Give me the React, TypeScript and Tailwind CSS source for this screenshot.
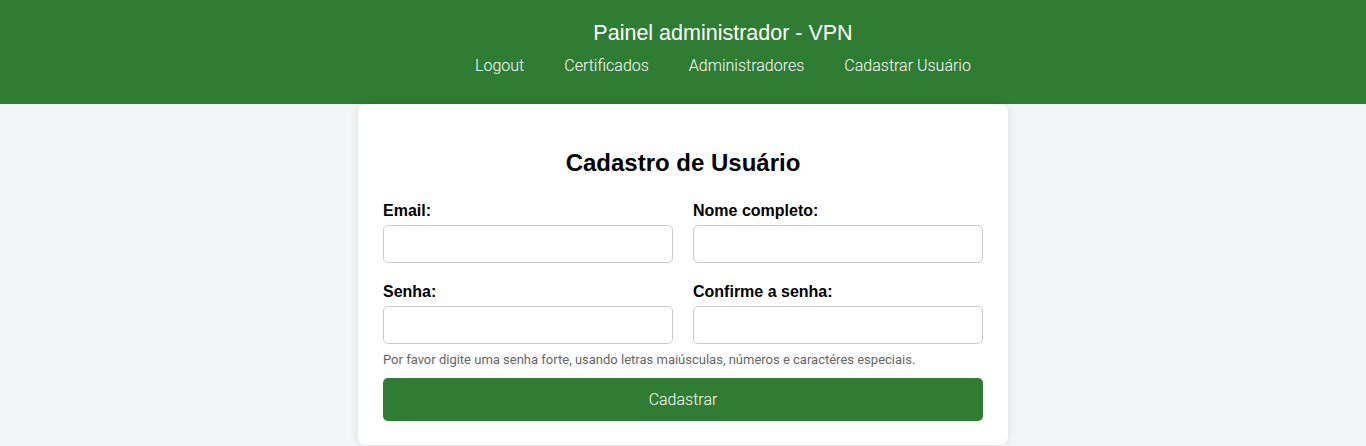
const Field = ({ label, type }: { label: string; type: string }) => (
  <div className="flex flex-col">
    <label className="text-[16px] font-bold leading-[18px] text-black mb-[5px]">{label}</label>
    <input type={type} className="h-[38px] w-full rounded-[5px] border border-[#cccccc] bg-white px-2 outline-none" />
  </div>
);

export default function App() {
  return (
    <div className="min-h-screen bg-[#f4f5f7] font-['Liberation_Sans',Arial,sans-serif]">
      <header className="h-[104px] bg-[#2e7d32] pl-[80px] text-white flex flex-col items-center">
        <h1 className="mt-[21px] text-[21.5px] leading-[25px]">Painel administrador - VPN</h1>
        <nav className="mt-[10px] flex gap-[40px] font-['Roboto',sans-serif] font-light text-[16px] leading-[20px]">
          <a href="#">Logout</a>
          <a href="#">Certificados</a>
          <a href="#">Administradores</a>
          <a href="#">Cadastrar Usuário</a>
        </nav>
      </header>

      <main className="flex justify-center">
        <div className="w-[650px] rounded-[8px] bg-white px-[25px] pt-[45px] pb-[24px] shadow-[0_0_10px_rgba(0,0,0,0.1)]">
          <h2 className="text-center text-[24px] font-bold leading-[28px] text-black">Cadastro de Usuário</h2>
          <div className="mt-[25px] grid grid-cols-2 gap-x-[20px] gap-y-[20px]">
            <Field label="Email:" type="email" />
            <Field label="Nome completo:" type="text" />
            <Field label="Senha:" type="password" />
            <Field label="Confirme a senha:" type="password" />
          </div>
          <p className="mt-[7px] font-['Roboto',sans-serif] text-[13px] leading-[18px] text-[#666666]">
            Por favor digite uma senha forte, usando letras maiúsculas, números e caractéres especiais.
          </p>
          <button className="mt-[9px] h-[43px] w-full rounded-[5px] bg-[#2e7d32] font-['Roboto',sans-serif] font-light text-[16px] text-white">
            Cadastrar
          </button>
        </div>
      </main>
    </div>
  );
}
